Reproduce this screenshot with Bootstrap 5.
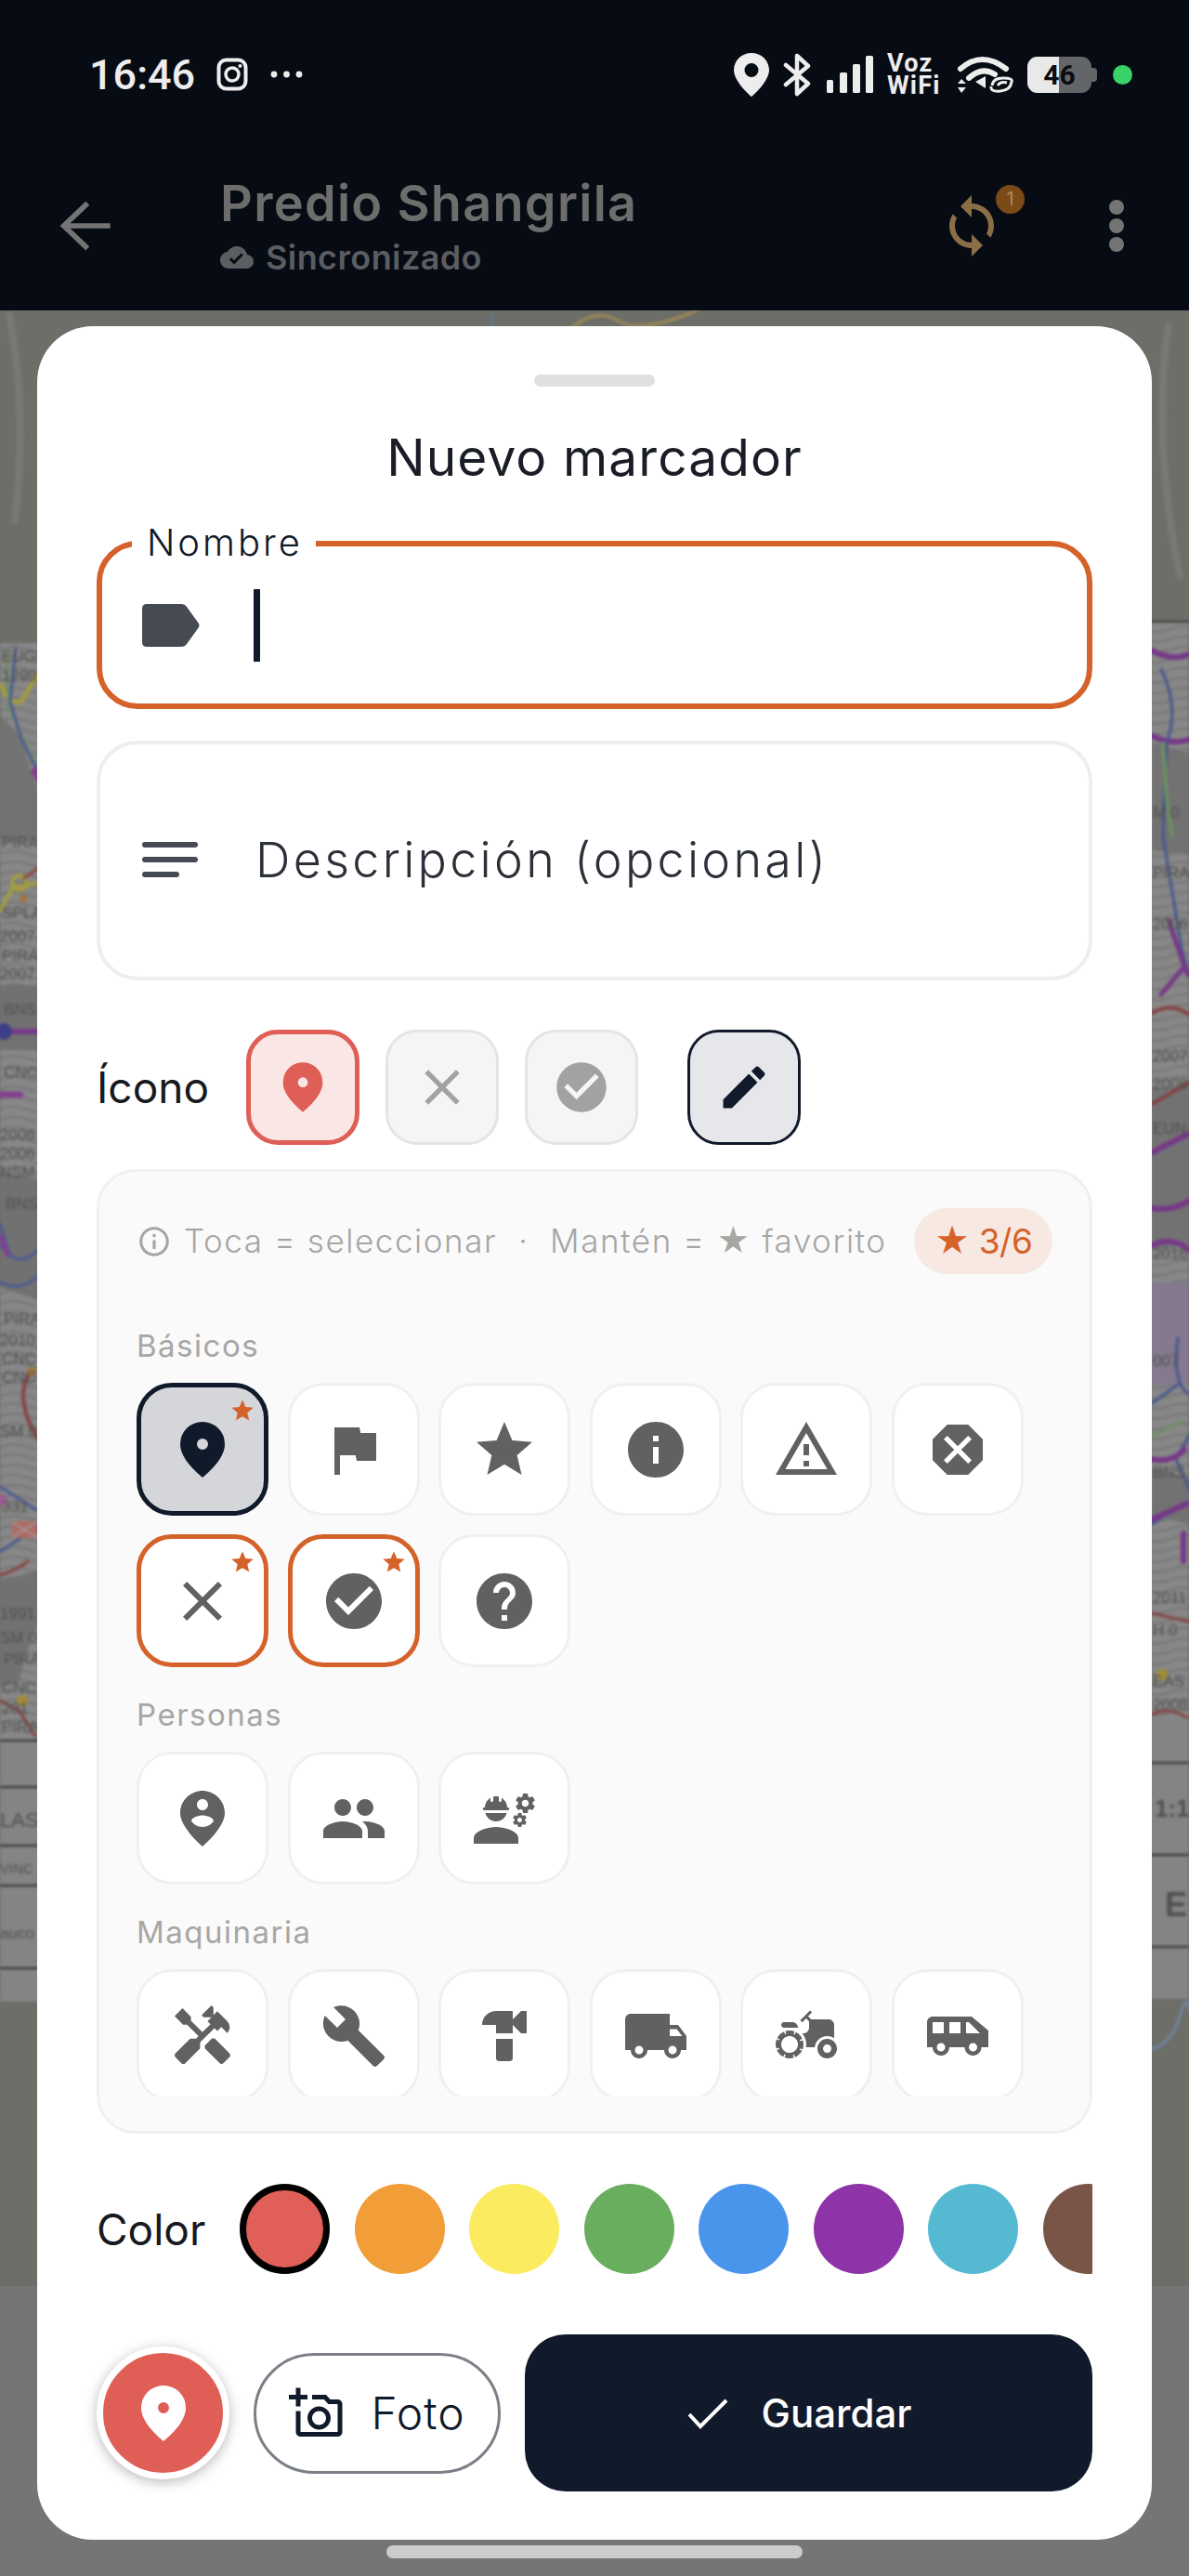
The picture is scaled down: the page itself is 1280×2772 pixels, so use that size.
<!DOCTYPE html>
<html lang="es">
<head>
  <meta charset="UTF-8" />
  <meta name="viewport" content="width=device-width, initial-scale=1.0"/>
  <title>Nuevo marcador</title>
  <link rel="stylesheet" href="https://cdn.jsdelivr.net/npm/bootstrap@5.3.0/dist/css/bootstrap.min.css"/>
  <style>
    html, body { margin: 0; }
    body {
      width: 1280px; height: 2772px; overflow: hidden; position: relative;
      background: #757575; font-family: Inter, "Liberation Sans", sans-serif; color: #111a2a;
    }
    svg { fill: currentColor; display: block; flex: none; }
    .map-layer { position: absolute; left: 0; top: 0; width: 1280px; height: 2772px; }
    .map-layer g.blurred { filter: blur(1.4px); }
    .map-layer text { font-family: "Liberation Sans", sans-serif; font-size: 17px; fill: #505050; stroke: none; }
    .map-layer .ln { fill: none; stroke-linecap: round; stroke-linejoin: round; }

    .top-area { position: relative; height: 334px; background: #070b13; }
    .status-row { height: 160px; padding: 0 61px 0 96px; color: #ededed; font-family: Roboto, sans-serif; }
    .clock { font-size: 45px; font-weight: 500; line-height: 1; margin-right: 23px; }
    .right-icons { gap: 15px; }
    .net-text { font-size: 27px; line-height: 24px; font-weight: 700; width: 61px; text-align: left; letter-spacing: 1.2px; }
    .batt { width: 75px; height: 39px; position: relative; }
    .batt-body { position: absolute; inset: 0 6px 0 0; border-radius: 11px; background: #646569; overflow: hidden; }
    .batt-fill { position: absolute; left: 0; top: 0; bottom: 0; width: 34px; background: #e9e9e9; }
    .batt-cap { position: absolute; right: 0; top: 12px; width: 6px; height: 15px; border-radius: 0 4px 4px 0; background: #646569; }
    .batt-num { position: absolute; inset: 0 6px 0 0; text-align: center; font-size: 30px; line-height: 39px; font-weight: 700; color: #0a0c10; }
    .priv-dot { width: 21px; height: 21px; border-radius: 50%; background: #37d268; margin-left: 2px; }

    .app-row { height: 166px; padding-right: 68px; color: #747474; }
    .app-back { margin-left: 52px; }
    .app-titles { margin-left: 105px; }
    .app-title { font-size: 54px; font-weight: 600; line-height: 60px; color: #6d6d6d; letter-spacing: 1.3px; margin-bottom: 7px; }
    .app-sub { font-size: 36px; font-weight: 600; line-height: 42px; color: #5b5d61; gap: 13px; letter-spacing: .4px; }
    .sync-wrap { position: relative; width: 72px; height: 72px; color: #8a6e47; margin-right: 110px; }
    .sync-badge {
      position: absolute; left: 62px; top: -8px; width: 31px; height: 31px; border-radius: 50%;
      background: #7a4a17; color: #b08a5c; font-size: 20px; line-height: 31px; text-align: center;
    }

    .sheet {
      position: absolute; left: 40px; top: 351px; width: 1200px; height: 2382px;
      background: #fff; border-radius: 60px; padding: 52px 64px 0;
    }
    .grab { width: 130px; height: 13px; border-radius: 7px; background: #e0e0e0; margin: 0 auto; }
    .sheet-title { text-align: center; font-size: 55px; font-weight: 400; line-height: 66px; margin: 43px 0 0; color: #1a1d26; letter-spacing: 1.1px; }

    .fld { position: relative; border-radius: 44px; padding-left: 48px; }
    .fld-name { height: 181px; margin-top: 57px; border: 6px solid #d4622a; }
    .fld-name .fld-ico { margin-left: -5px; }
    .fld-label {
      position: absolute; left: 32px; top: -26px; padding: 0 14px 0 16px; background: #fff;
      font-size: 40px; line-height: 44px; font-weight: 300; letter-spacing: 3px;
    }
    .caret-bar { width: 7px; height: 78px; background: #111a2a; margin-left: 58px; }
    .fld-desc { height: 258px; margin-top: 34px; border: 4px solid #eeeeee; color: #464a53; }
    .fld-desc svg { margin-left: -3px; }
    .fld-desc span { font-size: 52px; font-weight: 300; letter-spacing: 3.3px; margin-left: 60px; color: #2c3039; }
    .row-label { font-size: 46px; line-height: 1; color: #17191f; }

    .pick-row { margin-top: 53px; height: 124px; }
    .pick-row .row-label { width: 161px; }
    .chip { width: 122px; height: 124px; border-radius: 34px; border: 3px solid #e4e4e4; background: #f5f5f5; color: #a2a2a2; margin-right: 28px; }
    .chip-on { border: 5px solid #df5f57; background: #fae6e5; color: #df5f57; }
    .chip-edit { border: 3px solid #111a2a; background: #e6e7ea; color: #111a2a; margin-left: 25px; margin-right: 0; }

    .pick-panel {
      margin-top: 26px; height: 1038px; background: #fafafa; border: 3px solid #f0f0f0;
      border-radius: 42px; padding: 39px 40px 0 40px;
    }
    .hint-row { height: 71px; color: #a6a6a6; font-size: 35px; font-weight: 300; letter-spacing: 1.55px; white-space: nowrap; }
    .hint-row svg { margin-right: 13px; }
    .fav-count { margin-left: auto; width: 149px; height: 71px; border-radius: 36px; background: #f7e9e2; color: #d4622a; font-size: 37px; font-weight: 400; letter-spacing: -.5px; justify-content: center; }
    .icon-scroll { overflow: hidden; margin-top: 53px; height: 832px; margin-right: -30px; }
    .grp-label { height: 48px; line-height: 48px; margin: 0 0 16px; color: #a6a6a6; font-size: 33px; font-weight: 400; letter-spacing: 1.5px; }
    .cell-grid { display: flex; flex-wrap: wrap; gap: 20px 20.6px; margin-bottom: 27px; }
    .cell { position: relative; width: 142px; height: 143px; background: #fff; border: 3px solid #f0f0f0; border-radius: 38px; color: #616161; }
    .cell-sel { border: 5px solid #111a2a; background: #d5d6da; color: #111a2a; }
    .cell-fav { border: 5px solid #d4622a; }
    .fav-star { position: absolute; top: 11px; right: 9px; color: #d4622a; }

    .color-row { margin-top: 54px; height: 97px; }
    .color-row .row-label { width: 154px; }
    .dot-list { gap: 26.5px; overflow: hidden; width: 918px; }
    .swatch { width: 97px; height: 97px; border-radius: 50%; flex: none; }
    .swatch-on { border: 7px solid #000; }

    .action-row { margin-top: 65px; gap: 26px; height: 169px; }
    .fab-pin { width: 143px; height: 143px; border-radius: 50%; background: #df5f57; border: 7px solid #fff; color: #fff; box-shadow: 0 3px 14px rgba(0,0,0,.28); flex: none; }
    .btn-foto { width: 266px; height: 130px; border: 3px solid #7b7f87; border-radius: 65px; background: #fff; color: #111a2a; font-size: 48px; font-weight: 300; gap: 28px; padding: 0; letter-spacing: 1px; }
    .btn-guardar { flex: 1; height: 169px; border: 0; border-radius: 44px; background: #111a2a; color: #fff; font-size: 42px; font-weight: 500; gap: 35px; padding: 0 19px 0 0; }
    .ok-mark { fill: none; stroke: currentColor; stroke-width: 4; }
    .back-mark { fill: none; stroke: currentColor; stroke-width: 1.7; }

    .home-bar { position: absolute; left: 416px; top: 2739px; width: 448px; height: 14px; border-radius: 7px; background: #ccc; }
  </style>
</head>
<body>
  <!-- icon set -->
  <svg class="d-none" xmlns="http://www.w3.org/2000/svg">
    <symbol id="i-pin" viewBox="0 0 24 24"><path d="M12 12q.825 0 1.413-.587T14 10t-.587-1.412T12 8t-1.412.588T10 10t.588 1.413T12 12m0 10q-4.025-3.425-6.012-6.362T4 10.2q0-3.75 2.413-5.975T12 2t5.588 2.225T20 10.2q0 2.5-1.987 5.438T12 22"/></symbol>
    <symbol id="i-close" viewBox="0 0 24 24"><path d="M6.4 19L5 17.6l5.6-5.6L5 6.4 6.4 5l5.6 5.6L17.6 5 19 6.4 13.4 12l5.6 5.6-1.4 1.4-5.6-5.6z"/></symbol>
    <symbol id="i-check-c" viewBox="0 0 24 24"><path d="M12 2C6.48 2 2 6.48 2 12s4.48 10 10 10 10-4.48 10-10S17.52 2 12 2zm-2 15l-5-5 1.41-1.41L10 14.17l7.59-7.59L19 8l-9 9z"/></symbol>
    <symbol id="i-edit" viewBox="0 0 24 24"><path d="M3 17.25V21h3.75L17.81 9.94l-3.75-3.75L3 17.25zM20.71 7.04c.39-.39.39-1.02 0-1.41l-2.34-2.34c-.39-.39-1.02-.39-1.41 0l-1.83 1.83 3.75 3.75 1.83-1.83z"/></symbol>
    <symbol id="i-star" viewBox="0 0 24 24"><path d="M12 17.27L18.18 21l-1.64-7.03L22 9.24l-7.19-.61L12 2 9.19 8.63 2 9.24l5.46 4.73L5.82 21z"/></symbol>
    <symbol id="i-flag" viewBox="0 0 24 24"><path d="M14.4 6L14 4H5v17h2v-7h5.6l.4 2h7V6z"/></symbol>
    <symbol id="i-info" viewBox="0 0 24 24"><path d="M12 2C6.48 2 2 6.48 2 12s4.48 10 10 10 10-4.48 10-10S17.52 2 12 2zm1 15h-2v-6h2v6zm0-8h-2V7h2v2z"/></symbol>
    <symbol id="i-warn" viewBox="0 0 24 24"><path d="M12 5.99L19.53 19H4.47L12 5.99M12 2L1 21h22L12 2zm1 14h-2v2h2v-2zm0-6h-2v4h2v-4z"/></symbol>
    <symbol id="i-danger" viewBox="0 0 24 24"><path d="M15.73 3H8.27L3 8.27v7.46L8.27 21h7.46L21 15.73V8.27L15.73 3zM17 15.74L15.74 17 12 13.26 8.26 17 7 15.74 10.74 12 7 8.26 8.26 7 12 10.74 15.74 7 17 8.26 13.26 12 17 15.74z"/></symbol>
    <symbol id="i-help" viewBox="0 0 24 24"><path d="M12 2C6.48 2 2 6.48 2 12s4.48 10 10 10 10-4.48 10-10S17.52 2 12 2zm1 17h-2v-2h2v2zm2.07-7.75l-.9.92C13.45 12.9 13 13.5 13 15h-2v-.5c0-1.1.45-2.1 1.17-2.83l1.24-1.26c.37-.36.59-.86.59-1.41 0-1.1-.9-2-2-2s-2 .9-2 2H8c0-2.21 1.79-4 4-4s4 1.79 4 4c0 .88-.36 1.68-.93 2.25z"/></symbol>
    <symbol id="i-person-pin" viewBox="0 0 24 24"><path d="M12 2C8.14 2 4 5.14 4 10c0 5.25 8 12 8 12s8-6.75 8-12c0-4.86-4.14-8-8-8zm0 3c1.1 0 2 .9 2 2 0 1.11-.9 2-2 2s-2-.89-2-2c0-1.1.9-2 2-2zm0 10c-1.67 0-3.14-.85-4-2.15.02-1.32 2.67-2.05 4-2.05s3.98.73 4 2.05c-.86 1.3-2.33 2.15-4 2.15z"/></symbol>
    <symbol id="i-group" viewBox="0 0 24 24"><path d="M16 11c1.66 0 2.99-1.34 2.99-3S17.66 5 16 5c-1.66 0-3 1.34-3 3s1.34 3 3 3zm-8 0c1.66 0 2.99-1.34 2.99-3S9.66 5 8 5C6.34 5 5 6.34 5 8s1.34 3 3 3zm0 2c-2.33 0-7 1.17-7 3.5V19h14v-2.5c0-2.33-4.67-3.5-7-3.5zm8 0c-.29 0-.62.02-.97.05 1.16.84 1.97 1.97 1.97 3.45V19h6v-2.5c0-2.33-4.67-3.5-7-3.5z"/></symbol>
    <symbol id="i-engineer" viewBox="0 0 24 24"><path d="M9 15c-2.67 0-8 1.34-8 4v2h16v-2c0-2.66-5.33-4-8-4z"/><path d="M22.1 6.84c.01-.11.02-.22.02-.34 0-.12-.01-.23-.03-.34l.74-.58c.07-.05.08-.15.04-.22l-.7-1.21c-.04-.08-.14-.1-.21-.08l-.86.35c-.18-.14-.38-.25-.59-.34l-.13-.93c-.01-.08-.08-.14-.17-.14h-1.4c-.09 0-.16.06-.17.15l-.13.93c-.21.09-.41.21-.59.34l-.87-.35c-.08-.03-.17 0-.21.08l-.7 1.21c-.04.08-.03.17.04.22l.74.58c-.02.11-.03.23-.03.34 0 .11.01.23.03.34l-.74.58c-.07.05-.08.15-.04.22l.7 1.21c.04.08.14.1.21.08l.87-.35c.18.14.38.25.59.34l.13.93c.01.09.08.15.17.15h1.4c.09 0 .16-.06.17-.15l.13-.93c.21-.09.41-.21.59-.34l.87.35c.08.03.17 0 .21-.08l.7-1.21c.04-.08.03-.17-.04-.22l-.73-.58zm-2.6.91c-.69 0-1.25-.56-1.25-1.25s.56-1.25 1.25-1.25 1.25.56 1.25 1.25-.56 1.25-1.25 1.25z"/><path d="M19.92 11.68l-.5-.87c-.03-.06-.1-.08-.15-.06l-.62.25c-.13-.1-.27-.18-.42-.24l-.09-.66c-.02-.06-.08-.1-.14-.1h-1c-.06 0-.11.04-.12.11l-.09.66c-.15.06-.29.15-.42.24l-.62-.25c-.06-.02-.12 0-.15.06l-.5.87c-.03.06-.02.12.03.16l.53.41c-.01.08-.02.16-.02.24 0 .08.01.17.02.24l-.53.41c-.05.04-.06.11-.03.16l.5.87c.03.06.1.08.15.06l.62-.25c.13.1.27.18.42.24l.09.66c.01.07.06.11.12.11h1c.06 0 .12-.04.12-.11l.09-.66c.15-.06.29-.15.42-.24l.62.25c.06.02.12 0 .15-.06l.5-.87c.03-.06.02-.12-.03-.16l-.52-.41c.01-.08.02-.16.02-.24 0-.08-.01-.17-.02-.24l.53-.41c.05-.04.06-.11.03-.17zm-2.42 1.65c-.46 0-.83-.38-.83-.83 0-.46.38-.83.83-.83s.83.38.83.83c0 .46-.37.83-.83.83z"/><path d="M4.74 9h8.53c.27 0 .49-.22.49-.49v-.02c0-.27-.22-.49-.49-.49H13c0-1.48-.81-2.75-2-3.45v.95c0 .28-.22.5-.5.5s-.5-.22-.5-.5V4.14C9.68 4.06 9.35 4 9 4s-.68.06-1 .14V5.5c0 .28-.22.5-.5.5S7 5.78 7 5.5v-.95C5.81 5.25 5 6.52 5 8h-.26c-.27 0-.49.22-.49.49v.03c0 .26.22.48.49.48z"/><path d="M9 13c1.86 0 3.41-1.28 3.86-3H5.14c.45 1.72 2 3 3.86 3z"/></symbol>
    <symbol id="i-handyman" viewBox="0 0 24 24"><path d="M21.67 18.17l-5.3-5.3h-.99l-2.54 2.54v.99l5.3 5.3c.39.39 1.02.39 1.41 0l2.12-2.12c.39-.38.39-1.02 0-1.41z"/><path d="M17.34 10.19l1.41-1.41 2.12 2.12c1.17-1.17 1.17-3.07 0-4.24l-3.54-3.54-1.41 1.41V1.71l-.7-.71-3.54 3.54.71.71h2.83l-1.41 1.41 1.06 1.06-2.89 2.89-4.13-4.13V5.06L4.83 2.04 2 4.87 5.03 7.9h1.41l4.13 4.13-.85.85H7.6l-5.3 5.3c-.39.39-.39 1.02 0 1.41l2.12 2.12c.39.39 1.02.39 1.41 0l5.3-5.3v-2.12l5.15-5.15 1.06 1.05z"/></symbol>
    <symbol id="i-build" viewBox="0 0 24 24"><path d="M22.7 19l-9.1-9.1c.9-2.3.4-5-1.5-6.9-2-2-5-2.4-7.4-1.3L9 6 6 9 1.6 4.7C.4 7.1.9 10.1 2.9 12.1c1.9 1.9 4.6 2.4 6.9 1.5l9.1 9.1c.4.4 1 .4 1.4 0l2.3-2.3c.5-.4.5-1.1.1-1.4z"/></symbol>
    <symbol id="i-hammer" viewBox="0 0 24 24"><path d="M18 3l-3 3V3H9C6.24 3 4 5.24 4 8h5v3h6V8l3 3h2V3h-2zM9 13v7c0 .55.45 1 1 1h4c.55 0 1-.45 1-1v-7H9z"/></symbol>
    <symbol id="i-truck" viewBox="0 0 24 24"><path d="M20 8h-3V4H3c-1.1 0-2 .9-2 2v11h2c0 1.66 1.34 3 3 3s3-1.34 3-3h6c0 1.66 1.34 3 3 3s3-1.34 3-3h2v-5l-3-4zM6 18.5c-.83 0-1.5-.67-1.5-1.5s.67-1.5 1.5-1.5 1.5.67 1.5 1.5-.67 1.5-1.5 1.5zm13.5-9l1.96 2.5H17V9.5h2.5zm-1.5 9c-.83 0-1.5-.67-1.5-1.5s.67-1.5 1.5-1.5 1.5.67 1.5 1.5-.67 1.5-1.5 1.5z"/></symbol>
    <symbol id="i-tractor" viewBox="0 0 24 24"><path d="M19.5 12c.93 0 1.78.28 2.5.76V8c0-1.1-.9-2-2-2h-6.29l-1.06-1.06 1.41-1.41-.71-.71-3.53 3.53.71.71 1.41-1.41L13 6.71V9c0 1.1-.9 2-2 2h-.54c.95 1.06 1.54 2.46 1.54 4 0 .34-.04.67-.09 1h3.14c.25-2.25 2.14-4 4.45-4z"/><path d="M19.5 13c-1.93 0-3.5 1.57-3.5 3.5s1.57 3.5 3.5 3.5 3.5-1.57 3.5-3.5-1.57-3.5-3.5-3.5zm0 5c-.83 0-1.5-.67-1.5-1.5s.67-1.5 1.5-1.5 1.5.67 1.5 1.5-.67 1.5-1.5 1.5z"/><path d="M4 9h5c0-1.1-.9-2-2-2H4c-.55 0-1 .45-1 1s.45 1 1 1z"/><path d="M9.83 13.82l-.18-.47.93-.35c-.46-1.06-1.28-1.91-2.31-2.43l-.4.89-.46-.21.4-.9C7.26 10.13 6.64 10 6 10c-.53 0-1.04.11-1.52.26l.34.91-.47.18L4 10.42c-1.06.46-1.91 1.28-2.43 2.31l.89.4-.21.46-.9-.4C1.13 13.74 1 14.36 1 15c0 .53.11 1.04.26 1.52l.91-.34.18.47-.93.35c.46 1.06 1.28 1.91 2.31 2.43l.4-.89.46.21-.4.9c.55.22 1.17.35 1.81.35.53 0 1.04-.11 1.52-.26l-.34-.91.47-.18.35.93c1.06-.46 1.91-1.28 2.43-2.31l-.89-.4.21-.46.9.4c.22-.55.35-1.17.35-1.81 0-.53-.11-1.04-.26-1.52l-.91.34zm-2.68 3.95c-1.53.63-3.29-.09-3.92-1.62-.63-1.53.09-3.29 1.62-3.92 1.53-.63 3.29.09 3.92 1.62.64 1.53-.09 3.29-1.62 3.92z"/></symbol>
    <symbol id="i-van" viewBox="0 0 24 24"><path d="M17 5H3c-1.1 0-2 .89-2 2v9h2c0 1.65 1.34 3 3 3s3-1.35 3-3h5.5c0 1.65 1.34 3 3 3s3-1.35 3-3H23v-6l-6-5zM3 11V7h4v4H3zm3 6.5c-.83 0-1.5-.67-1.5-1.5s.67-1.5 1.5-1.5 1.5.67 1.5 1.5-.67 1.5-1.5 1.5zM13 11H9V7h4v4zm4.5 6.5c-.83 0-1.5-.67-1.5-1.5s.67-1.5 1.5-1.5 1.5.67 1.5 1.5-.67 1.5-1.5 1.5zM15 11V7h1l4 4h-5z"/></symbol>
  </svg>

  <!-- map behind the sheet -->
  <svg class="map-layer" viewBox="0 0 1280 2772" xmlns="http://www.w3.org/2000/svg">
    <defs>
      <pattern id="contours" width="60" height="22" patternUnits="userSpaceOnUse">
        <path d="M0 6q15-6 30 0t30 0M0 17q15-6 30 0t30 0" fill="none" stroke="#707070" stroke-width="1.4"/>
      </pattern>
    </defs>
    <rect x="0" y="334" width="1280" height="2126" fill="#6d6e68"/>
    <g class="blurred">
      <path class="ln" d="M530 340L528 356" stroke="#5f7690" stroke-width="3"/>
      <path class="ln" d="M612 356Q640 330 665 345T750 334" stroke="#a08a56" stroke-width="3"/>
      <path class="ln" d="M10 340Q30 440 16 560M1258 350Q1240 470 1270 620" stroke="#787973" stroke-width="8"/>

      <!-- left strip -->
      <rect x="0" y="692" width="44" height="1181" fill="#878787"/>
      <rect x="0" y="692" width="44" height="1181" fill="url(#contours)"/>
      <path d="M0 770L20 790L44 860V905H0z" fill="#727272"/>
      <path d="M0 1060H44V1130H0zM0 1260L44 1270V1400L0 1385z" fill="#717171"/>
      <path d="M0 1700L44 1690V1740L30 1775L20 1810L0 1815z" fill="#717171"/>
      <path class="ln" d="M0 737L11 755L23 755L44 720" stroke="#a39c40" stroke-width="5"/>
      <path class="ln" d="M8 700L9 760L38 823" stroke="#6c9060" stroke-width="3"/>
      <path class="ln" d="M17 697L11 755L23 795L40 829" stroke="#4b5a94" stroke-width="3"/>
      <path class="ln" d="M38 830L44 840" stroke="#84408f" stroke-width="9"/>
      <path class="ln" d="M0 980L14 955L44 950" stroke="#a39c40" stroke-width="4"/>
      <circle cx="21" cy="950" r="8" fill="none" stroke="#a39c40" stroke-width="4"/>
      <circle cx="25" cy="967" r="4" fill="#a3743a"/>
      <path class="ln" d="M44 932L26 945" stroke="#8f4440" stroke-width="3"/>
      <path class="ln" d="M0 1110H44" stroke="#763888" stroke-width="6"/>
      <circle cx="4" cy="1110" r="9" fill="#3f3d88"/>
      <path class="ln" d="M0 1178H22" stroke="#84408f" stroke-width="7"/>
      <path class="ln" d="M0 1317L11 1352M0 1340Q24 1370 44 1340M0 1380Q24 1392 44 1370" stroke="#4b5a94" stroke-width="3"/>
      <path class="ln" d="M0 1330L8 1350" stroke="#84408f" stroke-width="5"/>
      <path class="ln" d="M34 1476Q22 1490 26 1512T44 1552" stroke="#864240" stroke-width="4"/>
      <circle cx="34" cy="1476" r="5" fill="#a3743a"/>
      <path class="ln" d="M0 1600L40 1625M0 1670Q30 1650 44 1640" stroke="#4b5a94" stroke-width="3"/>
      <path class="ln" d="M40 1645Q44 1650 44 1660M30 1680Q18 1690 0 1695" stroke="#864240" stroke-width="3"/>
      <circle cx="2" cy="1614" r="6" fill="#9c5a94"/>
      <rect x="13" y="1637" width="27" height="18" fill="#b06a64"/>
      <path class="ln" d="M14 1638L39 1654M39 1638L14 1654" stroke="#999" stroke-width="2"/>
      <circle cx="24" cy="1830" r="6" fill="#a48c38"/>
      <path class="ln" d="M0 1830L20 1840L38 1868" stroke="#864240" stroke-width="3"/>
      <text x="2" y="712">EUGL</text><text x="2" y="733">1299</text>
      <text x="2" y="912">PIRA</text><text x="2" y="988">SPLA</text>
      <text x="0" y="1013">2007</text><text x="2" y="1034">PIRA</text>
      <text x="0" y="1054">2007</text><text x="4" y="1092">BNS</text>
      <text x="4" y="1160">CNC</text><text x="0" y="1227">2006</text>
      <text x="0" y="1247">2006</text><text x="0" y="1267">NSM</text>
      <text x="6" y="1301">BNS</text><text x="4" y="1425">PIRA</text>
      <text x="0" y="1448">2010</text><text x="2" y="1468">CNC</text>
      <text x="2" y="1488">CNC</text><text x="0" y="1546">SM 0</text>
      <text x="2" y="1627" font-style="italic">331</text>
      <text x="0" y="1742">1991</text><text x="0" y="1768">SM 0</text>
      <text x="4" y="1791">PIRA</text><text x="2" y="1822">CNC</text>
      <text x="2" y="1844">201</text><text x="2" y="1864">PIRA</text>

      <!-- left table -->
      <rect x="0" y="1873" width="44" height="281" fill="#848484"/>
      <path d="M0 1873H44M0 1923H44M0 1986H44M0 2029H44M0 2118H44" stroke="#2f2f2f" stroke-width="2"/>
      <text x="0" y="1966" style="font-size:22px">LAS</text>
      <text x="0" y="2016" style="font-size:15px">VINC</text>
      <text x="0" y="2086" style="font-size:17px">auco</text>

      <!-- right strip -->
      <rect x="1236" y="669" width="44" height="1180" fill="#878787"/>
      <rect x="1236" y="669" width="44" height="1180" fill="url(#contours)"/>
      <path d="M1240 800L1280 810V920L1240 915zM1240 1170H1280V1340L1240 1345zM1240 1580L1280 1590V1640L1240 1630z" fill="#727272"/>
      <rect x="1240" y="1380" width="40" height="110" fill="#84798f"/>
      <path d="M1236 669H1280" stroke="#3c3c3c" stroke-width="2"/>
      <path class="ln" d="M1240 700Q1262 712 1280 704M1240 792Q1262 802 1280 796M1240 1240L1280 1220M1240 1300Q1262 1304 1280 1292M1240 1340Q1262 1330 1280 1345" stroke="#763888" stroke-width="6"/>
      <path class="ln" d="M1250 720Q1270 760 1256 800L1252 900L1272 1020L1280 1050" stroke="#46568e" stroke-width="3"/>
      <path class="ln" d="M1252 800L1256 860L1262 900" stroke="#6c9060" stroke-width="4"/>
      <path class="ln" d="M1258 990L1275 1040L1250 1070M1275 1040L1280 1050" stroke="#763888" stroke-width="5"/>
      <path class="ln" d="M1240 1090Q1262 1078 1280 1092M1240 1188L1280 1165" stroke="#864240" stroke-width="4"/>
      <path class="ln" d="M1268 1440Q1262 1490 1280 1500M1240 1510L1268 1490" stroke="#46568e" stroke-width="3"/>
      <path class="ln" d="M1240 1545L1272 1530" stroke="#6c9060" stroke-width="3"/>
      <path class="ln" d="M1280 1545L1266 1570L1284 1610M1240 1640L1272 1620" stroke="#46568e" stroke-width="3"/>
      <path class="ln" d="M1240 1570Q1260 1575 1275 1560M1240 1635L1278 1618M1274 1650V1680" stroke="#763888" stroke-width="6"/>
      <path class="ln" d="M1240 1736L1280 1745M1240 1845Q1260 1835 1280 1850" stroke="#864240" stroke-width="3"/>
      <circle cx="1251" cy="1802" r="6" fill="#a48c38"/>
      <text x="1241" y="880">M 0</text><text x="1241" y="945">PIRA</text>
      <text x="1241" y="1000">2006</text>
      <text x="1241" y="1142">2007</text><text x="1241" y="1172">2008</text>
      <text x="1241" y="1220">EUN</text><text x="1241" y="1355">2016</text>
      <text x="1241" y="1470">007</text><text x="1241" y="1590">BNS</text>
      <text x="1241" y="1725">2011</text><text x="1241" y="1760">H 0</text>
      <text x="1241" y="1815">EAS</text><text x="1241" y="1840">2008</text>

      <!-- right table -->
      <rect x="1236" y="1849" width="44" height="302" fill="#848484"/>
      <path d="M1236 1897H1280M1236 1996H1280M1236 2095H1280" stroke="#2f2f2f" stroke-width="2"/>
      <text x="1243" y="1955" style="font-size:26px;font-weight:700">1:1</text>
      <text x="1254" y="2062" style="font-size:36px;font-weight:700">E</text>
      <path class="ln" d="M1240 2205Q1262 2198 1270 2170T1280 2163" stroke="#6f87a0" stroke-width="3"/>
    </g>
  </svg>

  <div class="top-area">
    <div class="status-row d-flex align-items-center justify-content-between">
      <div class="d-flex align-items-center">
        <span class="clock">16:46</span>
        <svg width="34" height="36" viewBox="0 0 34 36"><rect x="2.5" y="2.5" width="29" height="31" rx="8" fill="none" stroke="currentColor" stroke-width="4"/><circle cx="17" cy="18" r="7" fill="none" stroke="currentColor" stroke-width="3.5"/><circle cx="25.5" cy="9" r="2"/></svg>
        <svg class="ms-4" width="35" height="8" viewBox="0 0 35 8"><circle cx="4" cy="4" r="3.4"/><circle cx="17.5" cy="4" r="3.4"/><circle cx="31" cy="4" r="3.4"/></svg>
      </div>
      <div class="right-icons d-flex align-items-center">
        <svg width="38" height="47" viewBox="0 0 38 47"><path fill-rule="evenodd" d="M19 0C8.500 0 0 8 0 18.500C0 29 14 43 19 47C24 43 38 29 38 18.500C38 8 29.500 0 19 0ZM19 11A7.500 7.500 0 1 1 19 26A7.500 7.500 0 0 1 19 11Z"/></svg>
        <svg width="32" height="47" viewBox="0 0 32 47"><path d="M3 13L27 33L15 44V3L27 14L3 34" fill="none" stroke="currentColor" stroke-width="4.500" stroke-linejoin="round" stroke-linecap="round"/></svg>
        <svg width="50" height="40" viewBox="0 0 50 40"><rect x="0" y="26" width="7" height="14" rx="1.500"/><rect x="14" y="18" width="8" height="22" rx="1.500"/><rect x="28" y="9" width="8" height="31" rx="1.500"/><rect x="42" y="0" width="8" height="40" rx="1.500"/></svg>
        <div class="net-text">Voz<br>WiFi</div>
        <svg width="60" height="40" viewBox="0 0 60 40"><path d="M3 14Q26 -6 52 14M12 24Q26 11 40 20" fill="none" stroke="currentColor" stroke-width="6" stroke-linecap="round"/><path d="M19 28L30 22V35Z"/><path d="M4 25L0 30H9ZM4 40L0 34H9Z"/><path d="M37 32Q38 24 49 24T58 28Q57 37 46 38T36 33M43 32Q46 27 53 29" fill="none" stroke="currentColor" stroke-width="3"/></svg>
        <div class="batt">
          <div class="batt-body"><div class="batt-fill"></div></div>
          <div class="batt-cap"></div>
          <div class="batt-num">46</div>
        </div>
        <div class="priv-dot"></div>
      </div>
    </div>
    <div class="app-row d-flex align-items-center">
      <svg class="app-back" width="80" height="80" viewBox="0 0 24 24"><path class="back-mark" d="M20 12H5M12.700 4.700L5 12L12.700 19.300"/></svg>
      <div class="app-titles flex-grow-1">
        <div class="app-title">Predio Shangrila</div>
        <div class="app-sub d-flex align-items-center">
          <svg width="36" height="36" viewBox="0 0 24 24"><path d="M19.350 10.040C18.670 6.590 15.640 4 12 4 9.110 4 6.600 5.640 5.350 8.040 2.340 8.360 0 10.910 0 14c0 3.310 2.690 6 6 6h13c2.760 0 5-2.240 5-5 0-2.640-2.050-4.780-4.650-4.960zM10 17l-3.500-3.500 1.410-1.410L10 14.170 15.180 9l1.410 1.410L10 17z"/></svg>
          Sincronizado
        </div>
      </div>
      <div class="sync-wrap">
        <svg width="72" height="72" viewBox="0 0 24 24"><path d="M12 4V1L8 5l4 4V6c3.310 0 6 2.690 6 6 0 1.010-.25 1.970-.7 2.800l1.460 1.460C19.540 15.030 20 13.570 20 12c0-4.420-3.580-8-8-8zm0 14c-3.310 0-6-2.690-6-6 0-1.010.25-1.970.7-2.800L5.240 7.740C4.460 8.970 4 10.430 4 12c0 4.420 3.580 8 8 8v3l4-4-4-4v3z"/></svg>
        <span class="sync-badge">1</span>
      </div>
      <svg width="20" height="60" viewBox="0 0 20 60"><circle cx="10" cy="10" r="8"/><circle cx="10" cy="30" r="8"/><circle cx="10" cy="50" r="8"/></svg>
    </div>
  </div>

  <div class="sheet">
    <div class="grab"></div>
    <h1 class="sheet-title">Nuevo marcador</h1>

    <div class="fld fld-name d-flex align-items-center">
      <span class="fld-label">Nombre</span>
      <svg class="fld-ico" width="62" height="46" viewBox="0 0 62 46" color="#464a53"><path d="M5 0H42Q46 0 48 3L61 21Q62 23 61 25L48 43Q46 46 42 46H5Q0 46 0 41V5Q0 0 5 0Z"/></svg>
      <div class="caret-bar"></div>
    </div>

    <div class="fld fld-desc d-flex align-items-center">
      <svg width="62" height="40" viewBox="0 0 62 40"><rect width="60" height="6" rx="3"/><rect y="16" width="60" height="6" rx="3"/><rect y="32" width="40" height="6" rx="3"/></svg>
      <span>Descripción (opcional)</span>
    </div>

    <div class="pick-row d-flex align-items-center">
      <div class="row-label">Ícono</div>
      <div class="chip chip-on d-flex align-items-center justify-content-center"><svg width="64" height="64"><use href="#i-pin"/></svg></div>
      <div class="chip d-flex align-items-center justify-content-center"><svg width="64" height="64"><use href="#i-close"/></svg></div>
      <div class="chip d-flex align-items-center justify-content-center"><svg width="64" height="64"><use href="#i-check-c"/></svg></div>
      <div class="chip chip-edit d-flex align-items-center justify-content-center"><svg width="60" height="60"><use href="#i-edit"/></svg></div>
    </div>

    <div class="pick-panel">
      <div class="hint-row d-flex align-items-center">
        <svg width="38" height="38" viewBox="0 0 24 24"><path d="M11 7h2v2h-2zm0 4h2v6h-2zm1-9C6.480 2 2 6.480 2 12s4.480 10 10 10 10-4.480 10-10S17.520 2 12 2zm0 18c-4.410 0-8-3.590-8-8s3.590-8 8-8 8 3.590 8 8-3.590 8-8 8z"/></svg>
        <span>Toca = seleccionar &nbsp;·&nbsp; Mantén = ★ favorito</span>
        <span class="fav-count d-flex align-items-center">★ 3/6</span>
      </div>

      <div class="icon-scroll">
        <div class="grp-label">Básicos</div>
        <div class="cell-grid">
          <div class="cell cell-sel d-flex align-items-center justify-content-center"><svg width="72" height="72"><use href="#i-pin"/></svg><svg class="fav-star" width="28" height="28"><use href="#i-star"/></svg></div>
          <div class="cell d-flex align-items-center justify-content-center"><svg width="72" height="72"><use href="#i-flag"/></svg></div>
          <div class="cell d-flex align-items-center justify-content-center"><svg width="72" height="72"><use href="#i-star"/></svg></div>
          <div class="cell d-flex align-items-center justify-content-center"><svg width="72" height="72"><use href="#i-info"/></svg></div>
          <div class="cell d-flex align-items-center justify-content-center"><svg width="72" height="72"><use href="#i-warn"/></svg></div>
          <div class="cell d-flex align-items-center justify-content-center"><svg width="72" height="72"><use href="#i-danger"/></svg></div>
          <div class="cell cell-fav d-flex align-items-center justify-content-center"><svg width="72" height="72"><use href="#i-close"/></svg><svg class="fav-star" width="28" height="28"><use href="#i-star"/></svg></div>
          <div class="cell cell-fav d-flex align-items-center justify-content-center"><svg width="72" height="72"><use href="#i-check-c"/></svg><svg class="fav-star" width="28" height="28"><use href="#i-star"/></svg></div>
          <div class="cell d-flex align-items-center justify-content-center"><svg width="72" height="72"><use href="#i-help"/></svg></div>
        </div>
        <div class="grp-label">Personas</div>
        <div class="cell-grid">
          <div class="cell d-flex align-items-center justify-content-center"><svg width="72" height="72"><use href="#i-person-pin"/></svg></div>
          <div class="cell d-flex align-items-center justify-content-center"><svg width="72" height="72"><use href="#i-group"/></svg></div>
          <div class="cell d-flex align-items-center justify-content-center"><svg width="72" height="72"><use href="#i-engineer"/></svg></div>
        </div>
        <div class="grp-label">Maquinaria</div>
        <div class="cell-grid">
          <div class="cell d-flex align-items-center justify-content-center"><svg width="72" height="72"><use href="#i-handyman"/></svg></div>
          <div class="cell d-flex align-items-center justify-content-center"><svg width="72" height="72"><use href="#i-build"/></svg></div>
          <div class="cell d-flex align-items-center justify-content-center"><svg width="72" height="72"><use href="#i-hammer"/></svg></div>
          <div class="cell d-flex align-items-center justify-content-center"><svg width="72" height="72"><use href="#i-truck"/></svg></div>
          <div class="cell d-flex align-items-center justify-content-center"><svg width="72" height="72"><use href="#i-tractor"/></svg></div>
          <div class="cell d-flex align-items-center justify-content-center"><svg width="72" height="72"><use href="#i-van"/></svg></div>
        </div>
      </div>
    </div>

    <div class="color-row d-flex align-items-center">
      <div class="row-label">Color</div>
      <div class="dot-list d-flex" id="colorList"></div>
    </div>

    <div class="action-row d-flex align-items-center">
      <div class="fab-pin d-flex align-items-center justify-content-center"><svg width="72" height="72"><use href="#i-pin"/></svg></div>
      <button class="btn btn-foto d-flex align-items-center justify-content-center" type="button">
        <svg width="60" height="60" viewBox="0 0 24 24"><path d="M21 6h-3.170L16 4h-6v2h5.120l1.830 2H21v12H5v-9H3v9c0 1.100.9 2 2 2h16c1.100 0 2-.9 2-2V8c0-1.100-.9-2-2-2zM8 14c0 2.760 2.240 5 5 5s5-2.240 5-5-2.240-5-5-5-5 2.240-5 5zm5-3c1.650 0 3 1.350 3 3s-1.350 3-3 3-3-1.350-3-3 1.350-3 3-3zM5 6h3V4H5V1H3v3H0v2h3v3h2z"/></svg>
        Foto
      </button>
      <button class="btn btn-guardar d-flex align-items-center justify-content-center" type="button">
        <svg width="44" height="34" viewBox="0 0 44 34"><path class="ok-mark" d="M2 18L14 31L42 3"/></svg>
        Guardar
      </button>
    </div>
  </div>

  <div class="home-bar"></div>

  <script>
    const colors = ["#e05f58", "#f19e38", "#fbeb5e", "#69ad5e", "#4a95ec", "#8e33a8", "#55b9d2", "#795548"];
    const list = document.getElementById("colorList");
    colors.forEach((c, i) => {
      const d = document.createElement("div");
      d.className = i === 0 ? "swatch swatch-on" : "swatch";
      d.style.backgroundColor = c;
      list.appendChild(d);
    });
  </script>
  <script src="https://cdn.jsdelivr.net/npm/bootstrap@5.3.0/dist/js/bootstrap.bundle.min.js"></script>
</body>
</html>
